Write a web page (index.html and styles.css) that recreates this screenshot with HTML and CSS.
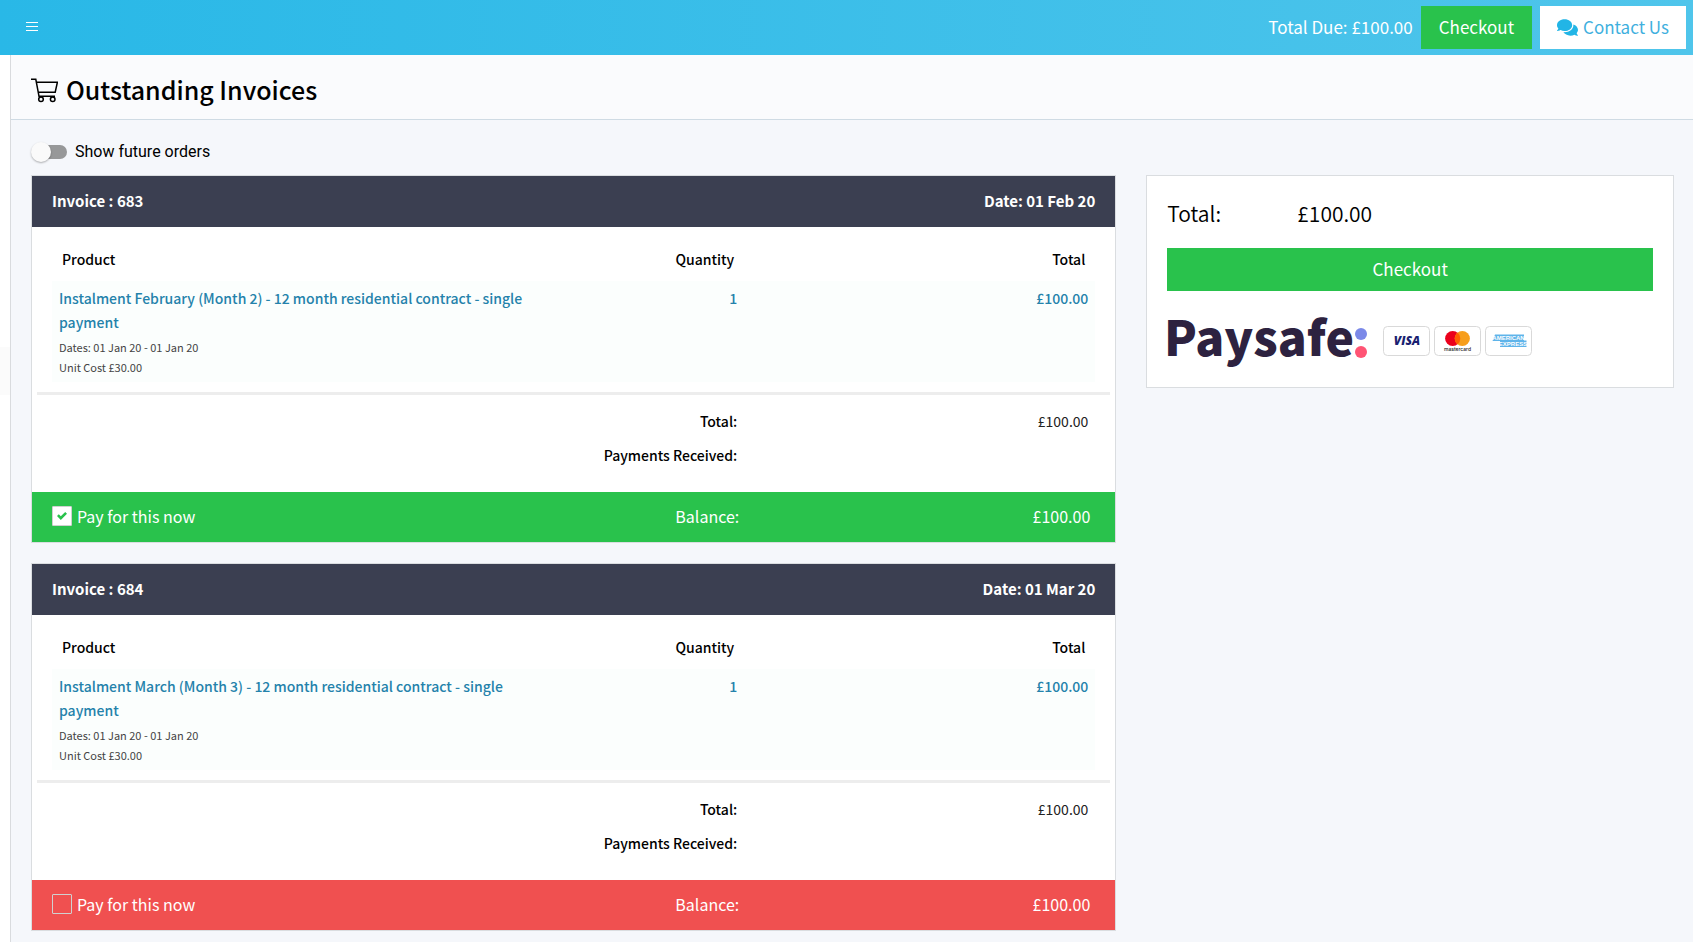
FILE: index.html
```html
<!DOCTYPE html>
<html lang="en">
<head>
<meta charset="utf-8">
<title>Outstanding Invoices</title>
<link rel="stylesheet" href="styles.css">
</head>
<body>
<header class="topbar">
  <button class="menu-btn" type="button" aria-label="Menu">
    <svg width="12" height="9" viewBox="0 0 12 9"><path d="M0 .5h12M0 4.5h12M0 8.5h12" stroke="#fff" fill="none"/></svg>
  </button>
  <div class="topbar-actions">
    <span class="total-due">Total Due: £100.00</span>
    <button class="btn btn-green" type="button">Checkout</button>
    <a class="btn btn-white" href="#contact">
      <svg width="21" height="17" viewBox="0 0 576 448" aria-hidden="true"><path fill="#22b5e6" d="M416 160C416 71.600 322.900 0 208 0S0 71.600 0 160c0 34.300 14.100 65.900 38 92-13.400 30.200-35.500 54.200-35.800 54.500-2.200 2.300-2.800 5.700-1.500 8.700S4.800 320 8 320c36.600 0 66.900-12.300 88.700-25 32.200 15.700 70.300 25 111.300 25 114.900 0 208-71.600 208-160zm122 220c23.900-26 38-57.700 38-92 0-66.900-53.500-124.200-129.300-148.100.9 6.600 1.300 13.300 1.300 20.100 0 105.900-107.700 192-240 192-10.800 0-21.300-.8-31.700-1.900C207.800 407.700 281.800 448 368 448c41 0 79.100-9.200 111.300-25 21.800 12.700 52.100 25 88.700 25 3.200 0 6.100-1.900 7.300-4.800 1.300-2.900.7-6.300-1.500-8.700-.3-.3-22.400-24.200-35.800-54.500z"/></svg>
      <span>Contact Us</span>
    </a>
  </div>
</header>
<div class="shell">
  <aside class="rail"><div class="rail-mark"></div></aside>
  <main class="main">
    <div class="title-bar">
      <svg class="cart" width="27" height="25" viewBox="0 0 27 25" fill="none" stroke="#000" stroke-width="1.500" aria-hidden="true"><path d="M0 1.300h4.800L8 18.300h16M5.400 4.200h21L24.200 14.200H7.300"/><circle cx="10" cy="21.300" r="2.300"/><circle cx="21.700" cy="21.300" r="2.300"/></svg>
      <h1>Outstanding Invoices</h1>
    </div>
    <div class="content">
      <label class="switch-row"><input class="switch" type="checkbox">Show future orders</label>
      <div class="row">
        <div class="col-main">
          <section class="card invoice">
            <div class="invoice-head"><h2>Invoice : 683</h2><span>Date: 01 Feb 20</span></div>
            <div class="invoice-body">
              <table class="items">
                <thead><tr><th class="c-product">Product</th><th class="c-qty">Quantity</th><th>Total</th></tr></thead>
                <tbody><tr><td><a href="#item">Instalment February (Month 2) - 12 month residential contract - single payment</a><small>Dates: 01 Jan 20 - 01 Jan 20</small><small>Unit Cost £30.00</small></td><td>1</td><td>£100.00</td></tr></tbody>
              </table>
            </div>
            <hr>
            <dl class="totals"><dt>Total:</dt><dd>£100.00</dd><dt>Payments Received:</dt><dd></dd></dl>
            <div class="pay pay-on"><label><input type="checkbox" checked>Pay for this now</label><span>Balance:</span><span>£100.00</span></div>
          </section>
          <section class="card invoice">
            <div class="invoice-head"><h2>Invoice : 684</h2><span>Date: 01 Mar 20</span></div>
            <div class="invoice-body">
              <table class="items">
                <thead><tr><th class="c-product">Product</th><th class="c-qty">Quantity</th><th>Total</th></tr></thead>
                <tbody><tr><td><a href="#item">Instalment March (Month 3) - 12 month residential contract - single payment</a><small>Dates: 01 Jan 20 - 01 Jan 20</small><small>Unit Cost £30.00</small></td><td>1</td><td>£100.00</td></tr></tbody>
              </table>
            </div>
            <hr>
            <dl class="totals"><dt>Total:</dt><dd>£100.00</dd><dt>Payments Received:</dt><dd></dd></dl>
            <div class="pay pay-off"><label><input type="checkbox">Pay for this now</label><span>Balance:</span><span>£100.00</span></div>
          </section>
        </div>
        <div class="col-side">
          <section class="card summary">
            <div class="summary-total"><span>Total:</span><span>£100.00</span></div>
            <button class="btn btn-green btn-block" type="button">Checkout</button>
            <div class="brands">
              <svg class="paysafe" width="202" height="56" viewBox="0 0 202 56" role="img" aria-label="Paysafe">
                <text x="-3" y="43" class="paysafe-text">Paysafe</text>
                <circle cx="194" cy="21" r="6" fill="#7b89e8"/><circle cx="194" cy="39" r="6" fill="#ff5474"/>
              </svg>
              <svg width="47" height="30" viewBox="0 0 47 30" role="img" aria-label="Visa"><rect x=".5" y=".5" width="46" height="29" rx="4" fill="#fff" stroke="#d9d9d9"/><text x="24" y="19" class="visa">VISA</text></svg>
              <svg width="47" height="30" viewBox="0 0 47 30" role="img" aria-label="Mastercard"><rect x=".5" y=".5" width="46" height="29" rx="4" fill="#fff" stroke="#d9d9d9"/><circle cx="18.700" cy="12.500" r="7.600" fill="#eb001b"/><circle cx="28.300" cy="12.500" r="7.600" fill="#f79e1b"/><path d="M23.500 6.600a7.600 7.600 0 0 1 0 11.800a7.600 7.600 0 0 1 0-11.800z" fill="#ff5f00"/><text x="23.500" y="25" class="mc">mastercard</text></svg>
              <svg width="47" height="30" viewBox="0 0 47 30" role="img" aria-label="American Express"><rect x=".5" y=".5" width="46" height="29" rx="4" fill="#fff" stroke="#d9d9d9"/><path d="M10 8.500h29v6h2.500V21H15v-6H7.500z" fill="#5fb4ea"/><text x="23.500" y="14" class="amex">AMERICAN</text><text x="28" y="20.300" class="amex">EXPRESS</text></svg>
            </div>
          </section>
        </div>
      </div>
    </div>
  </main>
</div>
</body>
</html>
```
FILE: styles.css
```css
* { box-sizing: border-box; }
html { height: 100%; }
body {
  margin: 0;
  min-height: 100%;
  display: flex;
  flex-direction: column;
  font-family: "Noto Sans CJK JP", "Noto Sans", sans-serif;
  font-size: 14px;
  line-height: 24px;
  color: #000;
  background: #fff;
}
.topbar {
  display: flex;
  align-items: center;
  justify-content: space-between;
  height: 55px;
  padding: 0 7px 0 16px;
  background: linear-gradient(90deg, #29b8e7, #4fc5eb);
}
.menu-btn { display: flex; padding: 10px 10px 12px; border: 0; background: none; }
.topbar-actions { display: flex; align-items: center; gap: 8px; }
.total-due { padding-bottom: 2px; color: #fff; font-size: 17px; }
.btn {
  display: flex;
  align-items: center;
  justify-content: center;
  gap: 5px;
  height: 43px;
  padding: 0 18px 1px;
  border: 0;
  font-family: inherit;
  font-size: 17px;
  line-height: 24px;
  text-decoration: none;
}
.btn-green { background: #29c24c; color: #fff; }
.btn-white { padding: 0 17px 1px; background: #fff; color: #3fb0de; }
.btn-block { width: 100%; }

.shell { flex: 1; display: flex; }
.rail { width: 11px; border-right: 1px solid #d9dbde; }
.rail-mark { height: 48px; margin-top: 292px; background: #fbfbfb; }
.main { flex: 1; background: #f5f7fb; }
.title-bar {
  display: flex;
  align-items: center;
  gap: 8px;
  height: 65px;
  padding: 4px 20px 0;
  background: #fafbfd;
  border-bottom: 1px solid #cfdbe4;
}
.cart { margin-top: 2px; }
h1 { margin: 0; font-size: 25px; line-height: 36px; font-weight: 500; }
.content { padding: 20px 4px 10px 5px; }
.switch-row {
  display: inline-flex;
  align-items: center;
  gap: 8px;
  height: 24px;
  margin: 0 15px 11px;
  font-family: Roboto, sans-serif;
  font-size: 16px;
}
.switch {
  appearance: none;
  position: relative;
  width: 34px;
  height: 14px;
  margin: 0 0 0 2px;
  border-radius: 7px;
  background: #979899;
}
.switch::before {
  content: "";
  position: absolute;
  left: -2px;
  top: -3px;
  width: 20px;
  height: 20px;
  border-radius: 50%;
  background: #fafafa;
  box-shadow: 0 1px 2px rgba(0, 0, 0, .3);
}
.row { display: flex; align-items: flex-start; }
.col-main { width: 66.667%; padding: 0 15px; display: grid; gap: 20px; }
.col-side { width: 33.333%; padding: 0 15px; }
.card { background: #fff; border: 1px solid #dadde0; }
.invoice-head {
  display: flex;
  justify-content: space-between;
  align-items: center;
  height: 51px;
  padding: 0 20px 2px;
  background: #3b3f51;
  color: #fff;
  font-size: 15px;
  font-weight: 700;
}
h2 { margin: 0; font-size: inherit; font-weight: inherit; }
.invoice-body { padding: 12px 20px 10px; }
.items { width: 100%; border-collapse: collapse; table-layout: fixed; }
.items th { height: 42px; padding: 0 10px 2px; font-weight: 500; text-align: right; }
.items td { padding: 5px 7px; vertical-align: top; text-align: right; color: #2482ab; font-weight: 500; background: #fbfefd; }
.items th:first-child, .items td:first-child { text-align: left; }
.items td:first-child { padding-right: 30px; }
.c-product { width: 50%; }
.c-qty { width: 16.35%; }
.items a { display: block; margin-bottom: 3px; color: inherit; text-decoration: none; }
.items small { display: block; font-size: 11px; line-height: 20px; font-weight: 400; color: #444; }
hr { height: 3px; margin: 0 5px; border: 0; background: #ededed; }
.totals {
  display: grid;
  grid-template-columns: 66.35% 1fr;
  grid-auto-rows: 34px;
  align-items: center;
  margin: 0;
  padding: 9px 20px 20px;
}
.totals dt, .totals dd { margin: 0; padding: 0 7px; text-align: right; }
.totals dt { font-weight: 500; }
.totals dd { color: #222; }
.pay {
  display: grid;
  grid-template-columns: 50% 16.35% 1fr;
  align-items: center;
  height: 50px;
  padding: 0 20px 2px;
  color: #fff;
  font-size: 16px;
}
.pay span { text-align: right; padding-right: 5px; }
.pay label { display: flex; align-items: center; gap: 5px; }
.pay input {
  appearance: none;
  display: grid;
  place-items: center;
  width: 20px;
  height: 20px;
  margin: 0;
  border: 1px solid #d0d0d0;
  border-radius: 1px;
}
.pay input:checked { background: #fff; }
.pay input:checked::before {
  content: "";
  width: 10px;
  height: 8px;
  background: #29c24c;
  clip-path: polygon(0 50%, 18% 28%, 38% 52%, 82% 0, 100% 22%, 38% 100%);
}
.pay-on { background: #29c24c; }
.pay-off { background: #f05050; }
.summary { padding: 20px 20px 18px; }
.summary-total { display: grid; grid-template-columns: 130px 1fr; font-size: 21px; font-weight: 350; line-height: 34px; margin-bottom: 18px; }
.brands { display: flex; align-items: center; gap: 4px; padding-top: 22px; }
.paysafe { margin-right: 10px; overflow: visible; }
.paysafe-text { font-family: "Noto Sans CJK JP", sans-serif; font-weight: 900; font-size: 48px; fill: #2d2240; }
.visa { font: italic 900 12px "Open Sans", sans-serif; fill: #1a1f71; text-anchor: middle; }
.mc { font: 500 5px Inter, sans-serif; fill: #222; text-anchor: middle; }
.amex { font: 800 6px "Liberation Sans", sans-serif; fill: #fff; text-anchor: middle; }
```
